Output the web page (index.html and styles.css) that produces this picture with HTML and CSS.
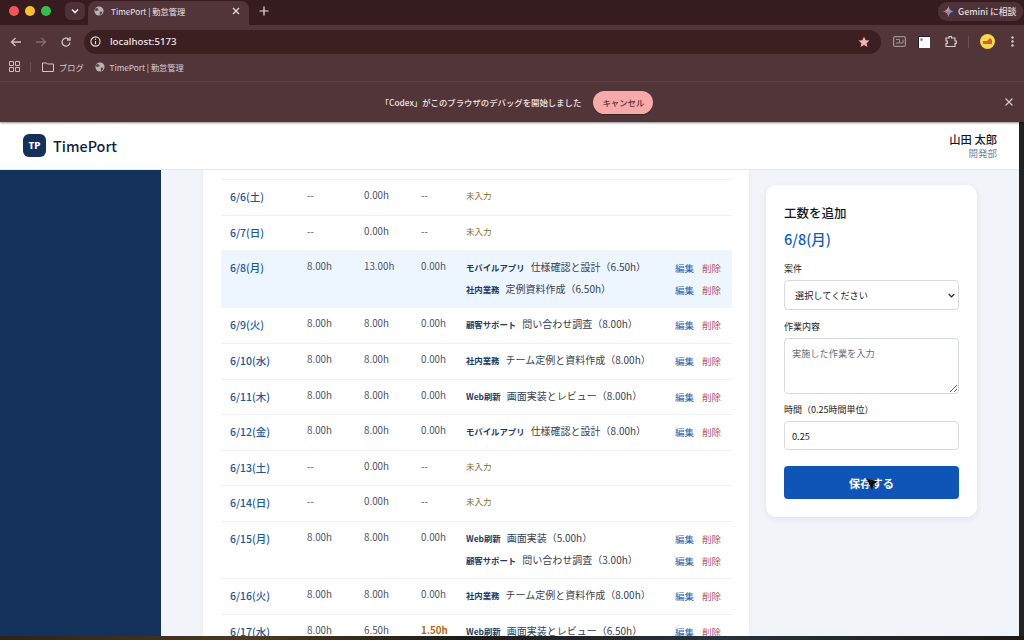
FILE: index.html
```html
<!DOCTYPE html>
<html lang="ja">
<head>
<meta charset="utf-8">
<title>TimePort | 勤怠管理</title>
<link rel="stylesheet" href="styles.css">
</head>
<body>
<div class="window">
  <div class="tabstrip">
    <div class="lights"><i class="red"></i><i class="yellow"></i><i class="green"></i></div>
    <div class="tabmenu"><svg width="10" height="10" viewBox="0 0 10 10"><path d="M2 3.500 5 6.500 8 3.500" fill="none" stroke="#f0e6e6" stroke-width="1.600"/></svg></div>
    <div class="tab">
      <svg class="globe" width="10" height="10" viewBox="0 0 12 12"><circle cx="6" cy="6" r="5.500" fill="#b9b3b3"/><path d="M2 2.500 5 3 5.500 5 3 6 1 5ZM7 6.500 10 7 9 10 7 11Z" fill="#5b4347"/></svg>
      <span class="tabtitle">TimePort | 勤怠管理</span>
      <svg class="tabx" width="8" height="8" viewBox="0 0 8 8"><path d="M1 1 7 7M7 1 1 7" stroke="#eadfe0" stroke-width="1.200"/></svg>
    </div>
    <svg class="newtab" width="10" height="10" viewBox="0 0 10 10"><path d="M5 .5V9.500M.5 5H9.500" stroke="#eadfe0" stroke-width="1.200"/></svg>
    <div class="gemini">
      <svg width="11" height="11" viewBox="0 0 12 12"><path d="M6 0C6.400 3.400 8.600 5.600 12 6 8.600 6.400 6.400 8.600 6 12 5.600 8.600 3.400 6.400 0 6 3.400 5.600 5.600 3.400 6 0Z" fill="#5c9ce8"/><path d="M6 0C5.600 3.400 3.400 5.600 0 6H6Z" fill="#e8a24a"/><path d="M0 6C3.400 6.400 5.600 8.600 6 12V6Z" fill="#d65c7a"/></svg>
      <span>Gemini に相談</span>
    </div>
  </div>
  <div class="toolbar">
    <svg class="nav" width="12" height="12" viewBox="0 0 12 12"><path d="M11 6H1.500M5.500 2 1.500 6 5.500 10" fill="none" stroke="#cfc4c5" stroke-width="1.300"/></svg>
    <svg class="nav" width="12" height="12" viewBox="0 0 12 12"><path d="M1 6H10.500M6.500 2 10.500 6 6.500 10" fill="none" stroke="#826d70" stroke-width="1.300"/></svg>
    <svg class="nav" width="12" height="12" viewBox="0 0 12 12"><path d="M10 6.500A4 4 0 1 1 8.800 3.200M10 1V4H7" fill="none" stroke="#cfc4c5" stroke-width="1.300"/></svg>
    <div class="omnibox">
      <svg width="11" height="11" viewBox="0 0 12 12"><circle cx="6" cy="6" r="5" fill="none" stroke="#e8dfdf" stroke-width="1.200"/><path d="M6 5.500V9M6 3V4.300" stroke="#e8dfdf" stroke-width="1.200"/></svg>
      <span class="url">localhost:5173</span>
      <svg class="star" width="12" height="12" viewBox="0 0 12 12"><path d="M6 .6 7.600 4.200 11.500 4.600 8.600 7.200 9.400 11.100 6 9.100 2.600 11.100 3.400 7.200 .5 4.600 4.400 4.200Z" fill="#f6aeb0"/></svg>
    </div>
    <div class="tools">
      <svg class="tool-cast" width="13" height="11" viewBox="0 0 13 11"><rect x=".6" y=".6" width="11.800" height="9.800" rx="1.500" fill="none" stroke="#a09193" stroke-width="1.200"/><path d="M3 3.500H6.500V7H3M7 7H10V3.500" fill="none" stroke="#a09193"/></svg>
      <span class="extbox"><i></i></span>
      <svg class="tool-puzzle" width="13" height="13" viewBox="0 0 13 13"><path d="M2 3H5V1.500H7.500V3H11V6H12.300V8.500H11V11.500H2V8.500H3.300V6H2Z" fill="none" stroke="#d8cdce" stroke-width="1.200"/></svg>
      <span class="sep"></span>
      <span class="avatar"><svg width="15" height="15" viewBox="0 0 15 15"><circle cx="7.500" cy="7.500" r="7.500" fill="#f4d94c"/><path d="M3 7H7L10 4 12 6V10H3Z" fill="#d9622b"/></svg></span>
      <svg class="more" width="3" height="11" viewBox="0 0 3 11"><circle cx="1.500" cy="1.500" r="1.200" fill="#d8cdce"/><circle cx="1.500" cy="5.500" r="1.200" fill="#d8cdce"/><circle cx="1.500" cy="9.500" r="1.200" fill="#d8cdce"/></svg>
    </div>
  </div>
  <div class="bookmarks">
    <svg width="11" height="11" viewBox="0 0 11 11"><path d="M.5.5H4.500V4.500H.5ZM6.500.5H10.500V4.500H6.500ZM.5 6.500H4.500V10.500H.5ZM6.500 6.500H10.500V10.500H6.500Z" fill="none" stroke="#c9bdbe"/></svg>
    <span class="bmsep"></span>
    <span class="bm"><svg width="12" height="10" viewBox="0 0 12 10"><path d="M.5 1H4.500L5.500 2H11.500V9.500H.5Z" fill="none" stroke="#d2c6c7"/></svg>ブログ</span>
    <span class="bm"><svg width="10" height="10" viewBox="0 0 12 12"><circle cx="6" cy="6" r="5.500" fill="#b9b3b3"/><path d="M2 2.500 5 3 5.500 5 3 6 1 5ZM7 6.500 10 7 9 10 7 11Z" fill="#5b4347"/></svg>TimePort | 勤怠管理</span>
  </div>
  <div class="infobar">
    <span class="infotext">「Codex」がこのブラウザのデバッグを開始しました</span>
    <button class="cancel" type="button">キャンセル</button>
    <svg class="infox" width="8" height="8" viewBox="0 0 8 8"><path d="M.5.5 7.500 7.500M7.500.5.5 7.500" stroke="#d8cdce" stroke-width="1.100"/></svg>
  </div>
  <div class="page">
    <div class="app">
      <header class="apphead">
        <div class="brand"><span class="logo">TP</span><span class="brandname">TimePort</span></div>
        <div class="user"><div class="username">山田 太郎</div><div class="dept">開発部</div></div>
      </header>
      <div class="appbody">
        <aside class="sidebar"></aside>
        <main class="content">
          <section class="sheet">
            <div class="row"><div class="d">6/6(土)</div><div class="n">--</div><div class="n">0.00h</div><div class="n">--</div><div class="work"><div class="none">未入力</div></div></div>
            <div class="row"><div class="d">6/7(日)</div><div class="n">--</div><div class="n">0.00h</div><div class="n">--</div><div class="work"><div class="none">未入力</div></div></div>
            <div class="row active"><div class="d">6/8(月)</div><div class="n">8.00h</div><div class="n">13.00h</div><div class="n">0.00h</div><div class="work">
              <div class="item"><b>モバイルアプリ</b><span class="desc">仕様確認と設計（6.50h）</span><span class="acts"><a>編集</a><a class="del">削除</a></span></div>
              <div class="item"><b>社内業務</b><span class="desc">定例資料作成（6.50h）</span><span class="acts"><a>編集</a><a class="del">削除</a></span></div>
            </div></div>
            <div class="row"><div class="d">6/9(火)</div><div class="n">8.00h</div><div class="n">8.00h</div><div class="n">0.00h</div><div class="work">
              <div class="item"><b>顧客サポート</b><span class="desc">問い合わせ調査（8.00h）</span><span class="acts"><a>編集</a><a class="del">削除</a></span></div>
            </div></div>
            <div class="row"><div class="d">6/10(水)</div><div class="n">8.00h</div><div class="n">8.00h</div><div class="n">0.00h</div><div class="work">
              <div class="item"><b>社内業務</b><span class="desc">チーム定例と資料作成（8.00h）</span><span class="acts"><a>編集</a><a class="del">削除</a></span></div>
            </div></div>
            <div class="row"><div class="d">6/11(木)</div><div class="n">8.00h</div><div class="n">8.00h</div><div class="n">0.00h</div><div class="work">
              <div class="item"><b>Web刷新</b><span class="desc">画面実装とレビュー（8.00h）</span><span class="acts"><a>編集</a><a class="del">削除</a></span></div>
            </div></div>
            <div class="row"><div class="d">6/12(金)</div><div class="n">8.00h</div><div class="n">8.00h</div><div class="n">0.00h</div><div class="work">
              <div class="item"><b>モバイルアプリ</b><span class="desc">仕様確認と設計（8.00h）</span><span class="acts"><a>編集</a><a class="del">削除</a></span></div>
            </div></div>
            <div class="row"><div class="d">6/13(土)</div><div class="n">--</div><div class="n">0.00h</div><div class="n">--</div><div class="work"><div class="none">未入力</div></div></div>
            <div class="row"><div class="d">6/14(日)</div><div class="n">--</div><div class="n">0.00h</div><div class="n">--</div><div class="work"><div class="none">未入力</div></div></div>
            <div class="row"><div class="d">6/15(月)</div><div class="n">8.00h</div><div class="n">8.00h</div><div class="n">0.00h</div><div class="work">
              <div class="item"><b>Web刷新</b><span class="desc">画面実装（5.00h）</span><span class="acts"><a>編集</a><a class="del">削除</a></span></div>
              <div class="item"><b>顧客サポート</b><span class="desc">問い合わせ調査（3.00h）</span><span class="acts"><a>編集</a><a class="del">削除</a></span></div>
            </div></div>
            <div class="row"><div class="d">6/16(火)</div><div class="n">8.00h</div><div class="n">8.00h</div><div class="n">0.00h</div><div class="work">
              <div class="item"><b>社内業務</b><span class="desc">チーム定例と資料作成（8.00h）</span><span class="acts"><a>編集</a><a class="del">削除</a></span></div>
            </div></div>
            <div class="row"><div class="d">6/17(水)</div><div class="n">8.00h</div><div class="n">6.50h</div><div class="n over">1.50h</div><div class="work">
              <div class="item"><b>Web刷新</b><span class="desc">画面実装とレビュー（6.50h）</span><span class="acts"><a>編集</a><a class="del">削除</a></span></div>
            </div></div>
          </section>
          <aside class="formcard">
            <h2 class="formtitle">工数を追加</h2>
            <div class="formdate">6/8(月)</div>
            <label class="lbl" for="p">案件</label>
            <div class="selwrap">
              <select class="ctl sel" id="p"><option>選択してください</option></select>
              <svg class="chev" width="7" height="5" viewBox="0 0 7 5"><path d="M.7 1 3.500 3.800 6.300 1" fill="none" stroke="#222" stroke-width="1.200"/></svg>
            </div>
            <label class="lbl" for="w">作業内容</label>
            <textarea class="ctl area" id="w" placeholder="実施した作業を入力"></textarea>
            <label class="lbl" for="t">時間（0.25時間単位）</label>
            <input class="ctl inp" id="t" value="0.25">
            <div class="savewrap">
              <button class="save" type="button">保存する</button>
              <svg class="cursor" width="12" height="12" viewBox="0 0 12 12"><path d="M.5.5 11.500 3.500 7.500 6 6 11.500Z" fill="#0c0c0c"/></svg>
            </div>
          </aside>
        </main>
      </div>
    </div>
    <div class="windowedge"></div>
  </div>
  <div class="desktop"></div>
</div>
</body>
</html>
```
FILE: styles.css
```css
* { box-sizing: border-box; }
html, body { margin: 0; height: 100%; overflow: hidden; }
body { font-family: "Noto Sans CJK JP", "Noto Sans", sans-serif; background: #1c1714; }
.window { width: 1024px; height: 640px; display: flex; flex-direction: column; overflow: hidden; }

.tabstrip { height: 25px; background: #371c1f; display: flex; align-items: center; position: relative; padding: 0 0 3px 9px; flex: none; }
.lights { display: flex; gap: 6px; }
.lights i { width: 10px; height: 10px; border-radius: 50%; display: block; }
.red { background: #f2565a; }
.yellow { background: #f8c32a; }
.green { background: #2fc04e; }
.tabmenu { width: 20px; height: 18px; margin-left: 14px; border-radius: 6px; background: #4d3337; display: flex; align-items: center; justify-content: center; }
.tab { width: 161px; height: 24px; margin: 1px 0 0 3px; align-self: flex-start; background: #523539; border-radius: 8px 8px 0 0; display: flex; align-items: center; padding: 0 9px 4px 6px; color: #ede3e3; font-size: 8.200px; }
.tab .globe { flex: none; }
.tabtitle { margin-left: 7px; flex: 1; }
.newtab { margin-left: 10px; }
.gemini { position: absolute; left: 938px; top: 2px; width: 85px; height: 19px; padding-left: 5px; border-radius: 9px; background: #4d3337; color: #e4dadb; font-size: 8.800px; font-weight: 500; display: flex; align-items: center; gap: 4px; }

.toolbar { height: 30px; background: #523539; display: flex; align-items: center; padding: 3px 0 0 10px; flex: none; }
.nav { margin-right: 13px; flex: none; }
.omnibox { width: 797px; height: 24px; margin-left: -1px; border-radius: 12px; background: #3b1f21; display: flex; align-items: center; padding: 0 11px 0 6px; color: #f1e8e8; font-size: 9.700px; flex: none; margin-right: 12px; }
.url { margin-left: 9px; flex: 1; font-weight: 500; font-family: "Noto Sans", sans-serif; }
.tools { display: flex; align-items: center; }
.tool-cast { margin-right: 12px; }
.extbox { width: 12px; height: 12px; background: #fff; display: block; border-left: 1px solid #222; border-top: 1px solid #222; position: relative; margin-right: 14px; }
.extbox i { position: absolute; left: 1px; top: 1px; width: 3px; height: 3px; border-radius: 50%; background: #8a88d8; }
.tool-puzzle { margin-right: 11px; }
.sep { width: 1px; height: 12px; background: #6a5053; margin-right: 11px; }
.avatar { display: block; width: 15px; height: 15px; margin-right: 16px; }
.avatar svg { display: block; }

.bookmarks { height: 27px; background: #523539; border-bottom: 1px solid #614649; display: flex; align-items: center; padding: 0 0 3px 9px; color: #d8cdce; font-size: 8.200px; flex: none; }
.bmsep { width: 1px; height: 10px; background: #6a5053; margin: 0 11px 0 10px; }
.bm { display: flex; align-items: center; gap: 5px; margin-right: 11px; }

.infobar { height: 40px; background: #523539; box-shadow: 0 1px 2px rgba(0,0,0,.45); position: relative; z-index: 2; display: flex; align-items: center; justify-content: center; color: #f0e7e7; font-size: 8.400px; font-weight: 500; padding-left: 10px; flex: none; }
.cancel { height: 23px; width: 60px; margin-left: 12px; border: 0; border-radius: 12px; padding: 0; background: #f8aaaa; color: #5c3134; font: 500 8.400px "Noto Sans CJK JP", sans-serif; box-shadow: 0 1px 1px rgba(0,0,0,.3); }
.infox { position: absolute; right: 11px; top: 16px; }

.page { flex: 1; display: flex; min-height: 0; }
.windowedge { width: 5px; background: #222; flex: none; }
.app { flex: 1; min-width: 0; display: flex; flex-direction: column; background: #f1f5f9; }
.apphead { height: 48px; background: #fff; border-bottom: 1px solid #e6e9ee; display: flex; align-items: center; justify-content: space-between; padding: 0 22px 0 23px; flex: none; }
.brand { display: flex; align-items: center; gap: 7px; }
.logo { width: 23px; height: 23px; border-radius: 6px; background: #14315c; color: #fff; font-size: 9px; font-weight: 900; display: flex; align-items: center; justify-content: center; }
.brandname { font-size: 14.400px; font-weight: 500; color: #0f1f3d; }
.user { text-align: right; padding-top: 1px; }
.username { font-size: 11.300px; font-weight: 500; color: #0f172a; line-height: 15px; }
.dept { font-size: 9.500px; color: #7a8494; line-height: 13px; }

.appbody { flex: 1; min-height: 0; display: flex; overflow: hidden; }
.sidebar { width: 161px; background: #14315c; flex: none; }
.content { flex: 1; display: flex; align-items: flex-start; padding-left: 42px; min-width: 0; }
.sheet { width: 546px; background: #fff; padding: 9px 17px 0 18px; flex: none; box-shadow: 0 0 3px rgba(15,40,80,.08); }
.row { display: grid; grid-template-columns: 77px 57px 57px 45px 1fr; border-top: 1px solid #eef0f3; padding: 8px 0 0 9px; min-height: 35.650px; color: #4b5563; font-size: 9.800px; line-height: 15px; }
.row.active { background: #edf5fe; border-top-color: #edf5fe; }
.row.active + .row { border-top-color: #edf5fe; }
.d { color: #22559f; font-size: 10.500px; font-weight: 500; padding-top: 1px; }
.over { color: #b4690e; font-weight: 700; }
.none { color: #8a6a25; font-size: 8.500px; }
.work { min-width: 0; }
.item { display: flex; align-items: baseline; height: 22px; color: #374151; font-size: 10px; }
.item:last-child { margin-bottom: 4px; }
.item b { font-size: 8.400px; font-weight: 700; color: #1c3a66; margin-right: 6px; }
.desc { flex: 1; white-space: nowrap; }
.acts { display: flex; gap: 8px; padding-right: 11px; font-size: 9.500px; position: relative; top: 1px; }
.acts a { color: #2d62ad; }
.acts .del { color: #b8525f; }

.formcard { width: 211px; margin: 15px 0 0 17px; background: #fff; border-radius: 10px; padding: 19px 18px 18px; display: flex; flex-direction: column; box-shadow: 0 2px 6px rgba(15,40,80,.08); flex: none; }
.formtitle { margin: 0; font-size: 12.500px; font-weight: 500; color: #111827; line-height: 18px; }
.formdate { font-size: 14.500px; font-weight: 500; color: #0f5bc4; line-height: 20px; margin-top: 7px; margin-bottom: 13px; }
.lbl { font-size: 9px; color: #222; line-height: 13px; margin-bottom: 5px; }
.ctl { width: 175px; border: 1px solid #d6dade; border-radius: 4px; background: #fff; font: 9.200px "Noto Sans CJK JP", sans-serif; color: #222; margin: 0; }
.selwrap { position: relative; margin-bottom: 10px; height: 30px; }
.sel { height: 30px; padding: 0 0 0 10px; appearance: none; display: block; }
.chev { position: absolute; right: 4px; top: 13px; }
.area { height: 56px; padding: 7px; margin-bottom: 9px; display: block; }
.area::placeholder { color: #6b6b6b; opacity: 1; }
.inp { height: 29px; padding: 0 7px; }
.savewrap { position: relative; margin-top: 16px; }
.save { display: block; width: 175px; height: 33px; border: 0; border-radius: 4px; background: #0f55b8; color: #fff; font: 700 11.200px "Noto Sans CJK JP", sans-serif; padding: 0; }
.cursor { position: absolute; left: 82px; top: 12px; filter: drop-shadow(0 0 2px rgba(70,80,100,.9)); }

.desktop { height: 4px; background: linear-gradient(90deg, #2d231a, #4a3a20 25%, #1d1b18 45%, #27333a 70%, #1c1a18); flex: none; }
```
